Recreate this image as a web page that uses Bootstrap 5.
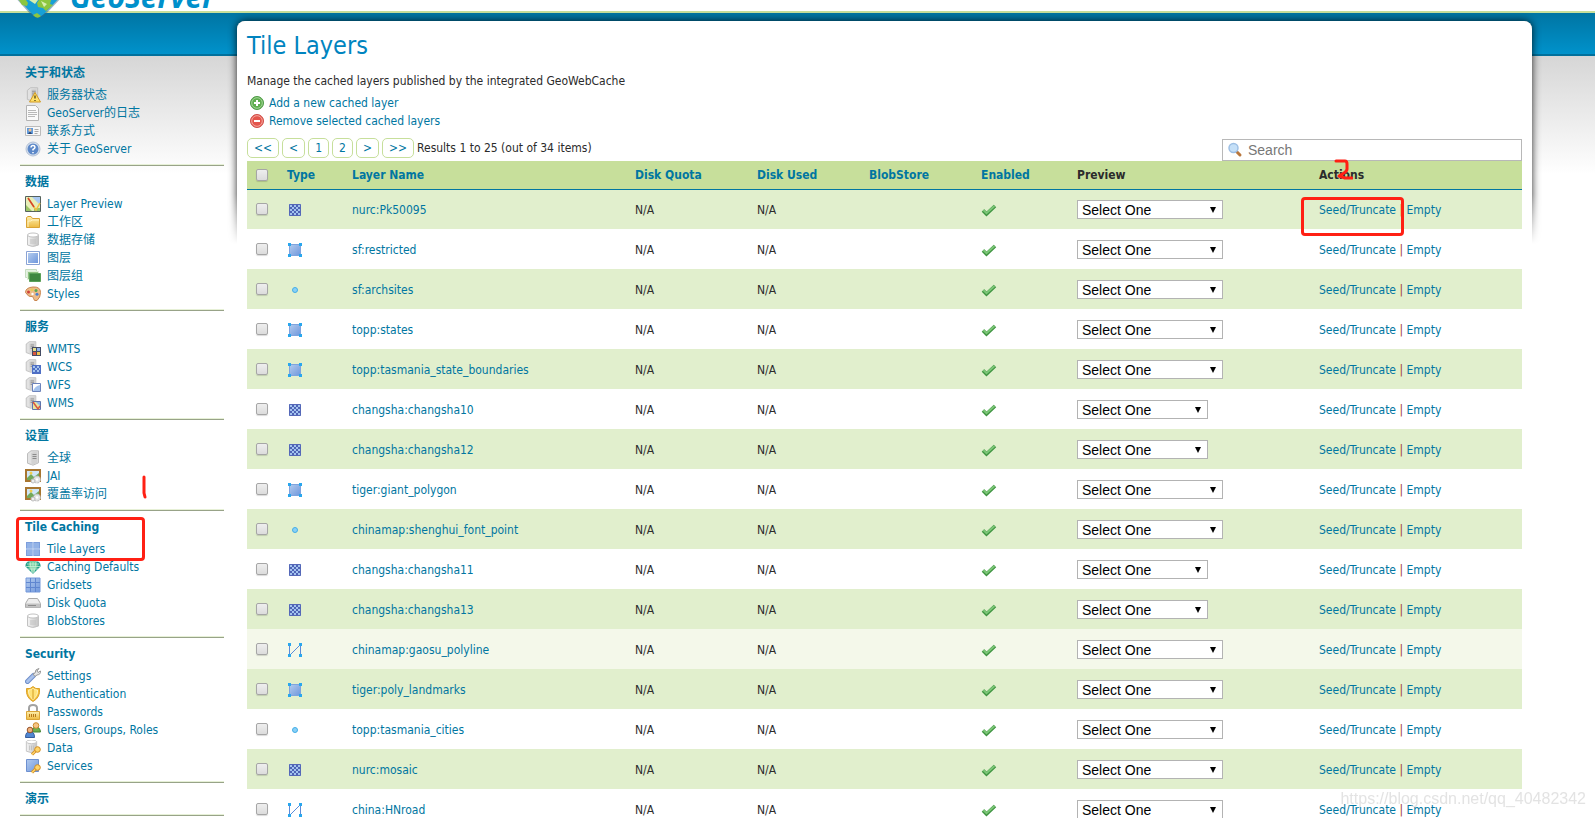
<!DOCTYPE html>
<html lang="zh-CN">
<head>
<meta charset="utf-8">
<meta name="viewport" content="width=device-width, initial-scale=1">
<title>GeoServer: Tile Layers</title>
<link href="https://cdn.jsdelivr.net/npm/bootstrap@5.3.0/dist/css/bootstrap.min.css" rel="stylesheet">
<style>
:root{--gs-link:#0076a1;--gs-red:#ff2014}
body{font-family:"DejaVu Sans Condensed","Noto Sans CJK SC",sans-serif;font-size:12px;line-height:18px;color:#2b2b2b;background:#fff}
a{color:var(--gs-link);text-decoration:none}
a:hover{text-decoration:underline}
svg{display:block}
.site-top{height:56px;border-bottom:2px solid #00709c;background:linear-gradient(#fff 0 11px,#c7df9b 11px 13px,#0075a3 13px,#0092cb 54px)}
.brand{height:20px;overflow:hidden;padding-left:14px;color:#0090cb}
.brand-name{font-family:"Open Sans",sans-serif;font-weight:700;font-style:italic;font-size:30px;line-height:30px;margin-top:-18px;margin-left:7px}
.page-shade{background:linear-gradient(#d6d6d6,#fff 118px)}
.side{width:237px;flex:none;padding:1px 13px 0 20px}
.side section{padding:7px 5px 7px;border-bottom:1px solid #98a388;box-shadow:inset 0 -1px #e6f0d6;position:relative}
.side section:first-child{padding-top:7px}
.side h2{font-size:12px;line-height:18px;font-weight:700;color:var(--gs-link);margin:0}
.side ul{margin:4px 0 0}
.side li{height:18px;display:flex;align-items:center;gap:6px}
.side li svg,.side li a{flex:none}
.panel{margin-top:-35px;margin-right:63px;padding:10px;background:#fff;border-radius:8px 8px 0 0;position:relative;z-index:0}
.panel-shadow{position:absolute;z-index:-1;top:-12px;left:-12px;right:-12px;height:235px;padding:12px;overflow:hidden;-webkit-mask-image:linear-gradient(#000 185px,transparent);mask-image:linear-gradient(#000 185px,transparent)}
.panel-shadow div{height:300px;border-radius:8px 8px 0 0;background:#fff;box-shadow:0 0 9px rgba(0,0,0,.85)}
h1{font-size:25px;line-height:30px;font-weight:400;color:#0084bf;margin:0 0 11px}
.cmds li{height:18px;display:flex;align-items:center;gap:4px;padding-left:2px}
.pager a{border:1px solid #c7df9b;border-radius:5px;padding:0 6px;height:20px;line-height:19px}
.pager{gap:3px;padding-bottom:3px}
.finder{width:300px;height:22px;border:1px solid #b8b8b8;padding-left:4px;gap:5px}
.finder input{border:0;outline:0;padding:0;width:100%;font:14px/18px "Liberation Sans",sans-serif;color:#444}
.finder input::placeholder{color:#777;opacity:1}
.layers{table-layout:fixed;width:100%;border-collapse:collapse}
.layers th{background:#c7df9b;height:28px;padding:0 0 0 5px;border-bottom:1px solid #0076a1}
.layers td{height:40px;padding:1px 0 0 5px;vertical-align:middle}
.layers tbody tr:nth-child(odd){background:#e1efcd}
.layers tbody tr.lit{background:#f4f8ea}
.layers th:first-child,.layers td:first-child{padding:0 0 0 9px}
.layers input{appearance:none;display:block;width:12px;height:12px;margin:0;border:1px solid #a6a6a6;border-radius:2px;background:linear-gradient(#eee,#dcdcdc);box-shadow:0 1px 1px rgba(0,0,0,.15)}
.layers select{appearance:none;display:block;width:146px;height:19px;padding:0 4px;border:1px solid #b3b3b3;border-radius:0;color:#000;font:14px/16px "Liberation Sans",sans-serif;background:#fff url("data:image/svg+xml,%3Csvg xmlns='http://www.w3.org/2000/svg' width='6' height='6'%3E%3Cpath d='M0 0h6L3 6z'/%3E%3C/svg%3E") no-repeat right 6px center}
.layers select.short{width:131px}
.bar-sep{color:#a03c2c}
.ring{position:absolute;border:3px solid var(--gs-red);border-radius:4px;pointer-events:none}
.ring-menu{left:-4px;top:6px;width:129px;height:44px}
.ring-seed{left:-18px;top:-4px;width:103px;height:39px}
.pen{position:absolute;fill:none;stroke:var(--gs-red);stroke-width:3;stroke-linecap:round;stroke-linejoin:round;pointer-events:none}
.pen-one{left:121px;bottom:10px}
.pen-two{left:14px;top:-9px}
.stamp{position:fixed;right:9px;bottom:9px;font:16px/20px "Liberation Sans",sans-serif;color:rgba(200,200,200,.5);pointer-events:none}
</style>
</head>
<body class="vh-100 overflow-hidden">

<svg width="0" height="0" class="position-absolute" aria-hidden="true">
<defs>
<linearGradient id="gBlue" x2="1" y2="1"><stop stop-color="#b3cbee"/><stop offset="1" stop-color="#6f97dc"/></linearGradient>
<linearGradient id="gGrey" x2="1"><stop stop-color="#f4f4f4"/><stop offset="1" stop-color="#c4c4c4"/></linearGradient>
<linearGradient id="gGold" x2="0" y2="1"><stop stop-color="#fdf0b0"/><stop offset="1" stop-color="#edb93f"/></linearGradient>
<pattern id="chk" width="4" height="4" patternUnits="userSpaceOnUse"><rect width="4" height="4" fill="#4f62b5"/><path d="M1 1h2v2H1zM3 3h1v1H3zM0 0h1v1H0zM3 0h1v1H3zM0 3h1v1H0z" fill="#a3c4ee"/></pattern>
<symbol id="server" viewBox="0 0 16 16"><path d="M2.500 3.500 6 .8h7.500v12L8 15.200l-5.500-2z" fill="#e2e2e2" stroke="#bdbdbd"/><path d="M6 3 12.500 1v12L6.500 15z" fill="#d2d2d2"/><path d="M7.500 4.500h4M7.500 6.500h4M7.500 8.500h4" stroke="#8b8b8b"/></symbol>
<symbol id="status" viewBox="0 0 16 16"><use href="#server" width="15" height="15"/><path d="M10 5.500 15.500 15h-11z" fill="#ffe06a" stroke="#d19a22"/><path d="M10 8.500v3M10 13v1" stroke="#5b4a10" stroke-width="1.400"/></symbol>
<symbol id="page" viewBox="0 0 16 16"><path d="M1.500.5h9l3 3v12h-12z" fill="#fafafa" stroke="#b3b3b3"/><path d="M3 5.500h8M3 7.500h9M3 9.500h9M3 11.500h7" stroke="#b8b8b8"/></symbol>
<symbol id="vcard" viewBox="0 0 16 16"><path d="M.5 3.500h15v9H.5z" fill="#f7f7f7" stroke="#bbb"/><path d="M2 5h6v6H2z" fill="#5f9adb"/><circle cx="5" cy="7" r="1.500" fill="#f5c089"/><path d="M3 11q2-4 4 0z" fill="#253f6d"/><path d="M9.500 6.500h4M9.500 8.500h4M9.500 10.500h3" stroke="#aaa"/></symbol>
<symbol id="help" viewBox="0 0 16 16"><circle cx="8" cy="8" r="7" fill="#d5dfed" stroke="#b3c1d6"/><circle cx="8" cy="8" r="5.500" fill="#5c88c8"/><path d="M6 6.500q.2-2 2-2t2 1.700Q10 7.500 8 8.500v1M8 11v1.200" fill="none" stroke="#fff" stroke-width="1.500"/></symbol>
<symbol id="map" viewBox="0 0 16 16"><path d="M.5.5h15v15H.5z" fill="#e7efb9" stroke="#56625c"/><path d="M7 1h8v8z" fill="#a9c9f3"/><path d="M1 9 7 15H1zM9 12h6v3H9z" fill="#9bc466"/><path d="m3 2 8 12 4-7" fill="none" stroke="#f0c243" stroke-width="1.500"/><path d="m3 2 6 9" stroke="#d6422c" stroke-width="1.500"/></symbol>
<symbol id="folder" viewBox="0 0 16 16"><path d="M1.500 13.500V3.500L3 2.500h3l1.500 2h7v9z" fill="url(#gGold)" stroke="#d9a334"/><path d="M3 13V7h3l1-1h7" fill="none" stroke="#fff3c4"/></symbol>
<symbol id="db" viewBox="0 0 16 16"><path d="M2.500 3v10q5 3 11 0V3z" fill="url(#gGrey)" stroke="#c2c2c2"/><ellipse cx="8" cy="3" rx="5.500" ry="2" fill="#fff" stroke="#c2c2c2"/><path d="M6 7v5M8 7v5M10 7v5" stroke="#c0c0c0"/></symbol>
<symbol id="layer" viewBox="0 0 16 16"><path d="M1.500 1.500h13v13h-13z" fill="#fff" stroke="#8aa3d5"/><path d="M3 3h10v10H3z" fill="url(#gBlue)"/></symbol>
<symbol id="group" viewBox="0 0 16 16"><path d="M.5 1.500h11v8H.5z" fill="#e6f2e3" stroke="#c5dcc0"/><path d="M2.500 3.500h11v8h-11z" fill="#8dc07e" stroke="#dceed6"/><path d="M4.500 5.500h11v8h-11z" fill="#3e8740" stroke="#5ba159"/></symbol>
<symbol id="palette" viewBox="0 0 16 16"><path d="M.5 6.500q0-5 7.500-5.500 7.500-.5 7.500 5.500 0 5-3.500 8-3 1-3.500-2T6 10.500.5 6.500z" fill="#edbb88" stroke="#c98650"/><circle cx="3.500" cy="6" r="1.500" fill="#cf4139"/><circle cx="7" cy="3.800" r="1.500" fill="#e9c955"/><circle cx="11" cy="4.500" r="1.500" fill="#5ba94e"/><circle cx="12" cy="8.200" r="1.500" fill="#4c7fd0"/><circle cx="7.500" cy="8" r="1.200" fill="#fff"/></symbol>
<symbol id="wmts" viewBox="0 0 16 16"><use href="#server" x="-1" width="14" height="14"/><path d="M7 6h9v9H7z" fill="#444c64"/><path d="M8 7h3v3H8z" fill="#e6e08d"/><path d="M12 7h3v3h-3z" fill="#8fb5ee"/><path d="M8 11h3v3H8z" fill="#d9563f"/><path d="M12 11h3v3h-3z" fill="#f0c550"/></symbol>
<symbol id="wcs" viewBox="0 0 16 16"><use href="#server" x="-1" width="14" height="14"/><path d="M7 6h9v9H7z" fill="#4f6fc5"/><path d="M8 7h2v2H8zM12 7h2v2h-2zM10 9h2v2h-2zM14 9h1v2h-1zM8 11h2v2H8zM12 11h2v2h-2z" fill="#a3c4ee"/></symbol>
<symbol id="wfs" viewBox="0 0 16 16"><use href="#server" x="-1" width="14" height="14"/><path d="M7.500 6.500h8v8h-8z" fill="#fff" stroke="#6c83bb"/><path d="M8 14q2-5 7-6v6z" fill="#a4c2ec"/></symbol>
<symbol id="wms" viewBox="0 0 16 16"><use href="#server" x="-1" width="14" height="14"/><path d="M7.500 6.500h8v8h-8z" fill="#e7e59f" stroke="#5d75ad"/><path d="M11 7h4v4z" fill="#8fb5ee"/><path d="m8 7 5 7 2-3" fill="none" stroke="#d9563f" stroke-width="1.500"/></symbol>
<symbol id="jai" viewBox="0 0 16 16"><path d="M1 2h14v11H1z" fill="#cfe6f8" stroke="#a87630" stroke-width="2"/><path d="m2 10 4-4 3 3 5-4v7H2z" fill="#73a95a"/><circle cx="6" cy="5" r="1.500" fill="#f2cf4f"/><circle cx="12" cy="11.500" r="3.500" fill="#e2e2e2" stroke="#b5b5b5" stroke-dasharray="2 1"/><circle cx="8" cy="13" r="2" fill="#eee" stroke="#bbb"/><circle cx="12" cy="11.500" r="1.200" fill="#fff"/></symbol>
<symbol id="tiles" viewBox="0 0 16 16"><path d="M1 1h14v14H1z" fill="#7d9edc"/><path d="M2 2h5.500v5.500H2zM9 2h5v5.500H9zM2 9h5.500v5H2zM9 9h5v5H9z" fill="#92b2e6"/><path d="M8 1v14M1 8h14" stroke="#c9daf4"/></symbol>
<symbol id="grid" viewBox="0 0 16 16"><path d="M1 1h14v14H1z" fill="url(#gBlue)" stroke="#7598da"/><path d="M5.500 1v14M10.500 1v14M1 5.500h14M1 10.500h14" stroke="#5f86d0"/></symbol>
<symbol id="gem" viewBox="0 0 16 16"><path d="M3 2.500h10q3 2 2.500 5L8 15 .5 7.500q-.5-3 2.500-5z" fill="#27a18b"/><path d="M5 2.500h6l2 5-5 6-5-6z" fill="#71cf9d"/><path d="M.5 7.500h15M2 5h12M2.500 10h11M5 3l2 11M8 3v12M11 3 9 14" stroke="#d5f2df" stroke-width=".7"/></symbol>
<symbol id="drive" viewBox="0 0 16 16"><path d="M3.500 3.500h9l3 5v4H.5v-4z" fill="#eee" stroke="#aaa"/><path d="M1 8.500h14v4H1z" fill="#c3c3c3"/><path d="M3 10.500h8" stroke="#8c8c8c"/></symbol>
<symbol id="wrench" viewBox="0 0 16 16"><path d="M2.500 13.500 8.500 7.500" stroke="#6f8fca" stroke-width="5" stroke-linecap="round"/><path d="M2.500 13.500 8.500 7.500" stroke="#a9c2ec" stroke-width="3" stroke-linecap="round"/><path d="m8 6 2-1q0-4 4-4.500L12 3l1 1.500L15.500 3Q16 6.500 12 7l-2 1.500z" fill="#e4e4e4" stroke="#999"/></symbol>
<symbol id="shield" viewBox="0 0 16 16"><path d="M1.500 2.500q4 1 6.500-2 2.500 3 6.500 2 1 9-6.500 13-7.500-4-6.500-13z" fill="#f3bd35" stroke="#dba22c"/><path d="M3.500 4Q6 4 8 2.500 10 4 12.500 4q.5 6-4.500 9.500Q3 10 3.500 4z" fill="#ffe379" stroke="#fff2b5"/><path d="M8 3v10" stroke="#d59e25"/></symbol>
<symbol id="lock" viewBox="0 0 16 16"><path d="M4 8V4q0-3 4-3t4 3v4" fill="none" stroke="#a2a2a2" stroke-width="2"/><path d="M1.500 7.500h13v8h-13z" fill="url(#gGold)" stroke="#dba536"/><path d="M4 11.500h8" stroke="#b77919" stroke-width="3" stroke-dasharray="1 1"/></symbol>
<symbol id="users" viewBox="0 0 16 16"><path d="M7 10q0-5 4-5t4.500 5z" fill="#70b04f" stroke="#458432"/><circle cx="11" cy="3.500" r="2.800" fill="#f6c586" stroke="#cc8a2c"/><path d="M.5 15.500q0-6 4.500-6t4.500 6z" fill="#5187d1" stroke="#355d9d"/><circle cx="5" cy="8" r="2.800" fill="#efb07a" stroke="#96532c"/></symbol>
<symbol id="key" viewBox="0 0 16 16"><path d="m7 14.500 5-5" stroke="#d08c22" stroke-width="3"/><path d="m7 14.500 5-5" stroke="#ffd56a" stroke-width="1.500"/><circle cx="12.500" cy="9.500" r="2.800" fill="#ffd56a" stroke="#d08c22"/></symbol>
<symbol id="dbkey" viewBox="0 0 16 16"><use href="#db" x="-1" y="-1" width="15" height="15"/><use href="#key" width="16" height="16"/></symbol>
<symbol id="svckey" viewBox="0 0 16 16"><path d="M1.500 1.500h12v12h-12z" fill="url(#gBlue)" stroke="#6d90d0"/><use href="#key" width="16" height="16"/></symbol>
<symbol id="add" viewBox="0 0 16 16"><circle cx="8" cy="8" r="6.500" fill="#5fae4f" stroke="#4d9b45"/><circle cx="8" cy="8" r="5.300" fill="none" stroke="#a4d399"/><path d="M8 5v6M5 8h6" stroke="#fff" stroke-width="2"/></symbol>
<symbol id="remove" viewBox="0 0 16 16"><circle cx="8" cy="8" r="6.500" fill="#e4554c" stroke="#cf4e48"/><circle cx="8" cy="8" r="5.300" fill="none" stroke="#f3a9a0"/><path d="M5 8h6" stroke="#fff" stroke-width="2"/></symbol>
<symbol id="lens" viewBox="0 0 16 16"><path d="m10 10 3 3" stroke="#b9773d" stroke-width="3" stroke-linecap="round"/><circle cx="6.500" cy="6" r="4.500" fill="#c5e0f8" stroke="#9dbfe4" stroke-width="1.500"/></symbol>
<symbol id="raster" viewBox="0 0 16 16"><path d="M2 2h12v12H2z" fill="url(#chk)"/><path d="M2.500 2.500h11v11h-11z" fill="none" stroke="#5568b8"/></symbol>
<symbol id="polygon" viewBox="0 0 16 16"><path d="M2.500 2.500h11v11h-11z" fill="url(#gBlue)" stroke="#7fa3de"/><path d="M1 1h3v3H1zM12 1h3v3h-3zM1 12h3v3H1zM12 12h3v3h-3z" fill="#29a7ee"/></symbol>
<symbol id="point" viewBox="0 0 16 16"><circle cx="8" cy="8" r="2.500" fill="#8ad0f6" stroke="#42aee8"/></symbol>
<symbol id="line" viewBox="0 0 16 16"><path d="M2.500 2.500v11l11-11v11" fill="none" stroke="#5b8bd8"/><path d="M1 1h3v3H1zM12 1h3v3h-3zM1 12h3v3H1zM12 12h3v3h-3z" fill="#29a7ee"/></symbol>
<symbol id="tick" viewBox="0 0 16 16"><path d="m2 8.500 3.500 3.500L14 4" fill="none" stroke="#3e9440" stroke-width="3.600"/><path d="m2.300 8 3.200 3.200L13.500 4" fill="none" stroke="#7cc677" stroke-width="2"/></symbol>
</defs>
</svg>

<header class="site-top">
  <div class="brand d-flex">
    <svg width="49" height="20" viewBox="0 0 49 20" aria-hidden="true">
      <path d="M0-4h49L31 15q-7 6-14 0z" fill="#35688a" opacity=".5"/>
      <path d="M1-5h47L30 14q-6 6-12 0z" fill="#17a0d6"/>
      <path d="M5 0h7l2 3-1 3-5-1zM25 0h12l-1 4 3 1-7 6-3-3-5-1-1-4zM19 15l4-2 4 3q-4 4-8-1z" fill="#8cc63f"/>
      <path d="M15 0h9l-3 4zM27 1l6 3-3 3z" fill="#d6efb0"/>
    </svg>
    <span class="brand-name">GeoServer</span>
  </div>
</header>

<div class="page-shade d-flex">
  <nav class="side">
    <section><h2>关于和状态</h2><ul class="list-unstyled" data-menu="status|服务器状态,page|GeoServer的日志,vcard|联系方式,help|关于 GeoServer"></ul></section>
    <section><h2>数据</h2><ul class="list-unstyled" data-menu="map|Layer Preview,folder|工作区,db|数据存储,layer|图层,group|图层组,palette|Styles"></ul></section>
    <section><h2>服务</h2><ul class="list-unstyled" data-menu="wmts|WMTS,wcs|WCS,wfs|WFS,wms|WMS"></ul></section>
    <section><h2>设置</h2><ul class="list-unstyled" data-menu="server|全球,jai|JAI,jai|覆盖率访问"></ul>
      <svg class="pen pen-one" width="8" height="26" viewBox="0 0 8 26" aria-hidden="true"><path d="M3 3v16l1 4"/></svg></section>
    <section><h2>Tile Caching</h2><ul class="list-unstyled" data-menu="tiles|Tile Layers,gem|Caching Defaults,grid|Gridsets,drive|Disk Quota,db|BlobStores"></ul>
      <div class="ring ring-menu"></div></section>
    <section><h2>Security</h2><ul class="list-unstyled" data-menu="wrench|Settings,shield|Authentication,lock|Passwords,users|Users; Groups; Roles,dbkey|Data,svckey|Services"></ul></section>
    <section><h2>演示</h2></section>
  </nav>

  <main class="panel flex-grow-1">
    <div class="panel-shadow"><div></div></div>
    <h1>Tile Layers</h1>
    <p class="m-0">Manage the cached layers published by the integrated GeoWebCache</p>
    <ul class="cmds list-unstyled mt-0 mb-0 pt-1 pb-1">
      <li><svg width="16" height="16"><use href="#add"/></svg><a href="#">Add a new cached layer</a></li>
      <li><svg width="16" height="16"><use href="#remove"/></svg><a href="#">Remove selected cached layers</a></li>
    </ul>
    <div class="d-flex justify-content-between align-items-end pt-1">
      <div class="pager d-flex align-items-center">
        <a href="#">&lt;&lt;</a><a href="#">&lt;</a><a href="#">1</a><a href="#">2</a><a href="#">&gt;</a><a href="#">&gt;&gt;</a>
        <span>Results 1 to 25 (out of 34 items)</span>
      </div>
      <label class="finder d-flex align-items-center bg-white">
        <svg class="flex-shrink-0" width="16" height="16"><use href="#lens"/></svg>
        <input type="text" placeholder="Search" aria-label="Search">
      </label>
    </div>
    <table class="layers">
      <colgroup><col style="width:35px"><col style="width:65px"><col><col style="width:122px"><col style="width:112px"><col style="width:112px"><col style="width:96px"><col style="width:242px"><col style="width:208px"></colgroup>
      <thead><tr>
        <th><input type="checkbox" aria-label="Select all"></th>
        <th><a href="#">Type</a></th><th><a href="#">Layer Name</a></th><th><a href="#">Disk Quota</a></th><th><a href="#">Disk Used</a></th>
        <th><a href="#">BlobStore</a></th><th><a href="#">Enabled</a></th><th>Preview</th>
        <th><span class="position-relative">Actions<svg class="pen pen-two" width="20" height="22" viewBox="0 0 20 22" aria-hidden="true"><path d="M3 2h9q2 0 2 3v5q0 2-3 4l-5 3 6 2h7"/></svg></span></th>
      </tr></thead>
      <tbody id="rows"></tbody>
    </table>
  </main>
</div>
<div class="stamp">https://blog.csdn.net/qq_40482342</div>

<script>
document.querySelectorAll('[data-menu]').forEach(function (ul) {
  ul.innerHTML = ul.dataset.menu.split(',').map(function (item) {
    var p = item.split('|');
    return '<li><svg width="16" height="16"><use href="#' + p[0] + '"/></svg><a href="#">' + p[1].replace(/;/g, ',') + '</a></li>';
  }).join('');
});
var layers = [
  ['raster', 'nurc:Pk50095'], ['polygon', 'sf:restricted'], ['point', 'sf:archsites'], ['polygon', 'topp:states'],
  ['polygon', 'topp:tasmania_state_boundaries'], ['raster', 'changsha:changsha10', 'short'], ['raster', 'changsha:changsha12', 'short'],
  ['polygon', 'tiger:giant_polygon'], ['point', 'chinamap:shenghui_font_point'], ['raster', 'changsha:changsha11', 'short'],
  ['raster', 'changsha:changsha13', 'short'], ['line', 'chinamap:gaosu_polyline'], ['polygon', 'tiger:poly_landmarks'],
  ['point', 'topp:tasmania_cities'], ['raster', 'nurc:mosaic'], ['line', 'china:HNroad']
];
document.getElementById('rows').innerHTML = layers.map(function (l, i) {
  return '<tr' + (i === 11 ? ' class="lit"' : '') + '><td><input type="checkbox" aria-label="Select ' + l[1] + '"></td>' +
    '<td><svg width="16" height="16"><use href="#' + l[0] + '"/></svg></td>' +
    '<td><a href="#">' + l[1] + '</a></td><td>N/A</td><td>N/A</td><td></td>' +
    '<td><svg width="16" height="16"><use href="#tick"/></svg></td>' +
    '<td><select class="' + (l[2] || '') + '" aria-label="Preview ' + l[1] + '"><option>Select One</option></select></td>' +
    '<td><div class="position-relative"><a href="#">Seed/Truncate</a> <span class="bar-sep">|</span> <a href="#">Empty</a>' +
    (i === 0 ? '<div class="ring ring-seed"></div>' : '') + '</div></td></tr>';
}).join('');
</script>
<script src="https://cdn.jsdelivr.net/npm/bootstrap@5.3.0/dist/js/bootstrap.bundle.min.js"></script>
</body>
</html>
